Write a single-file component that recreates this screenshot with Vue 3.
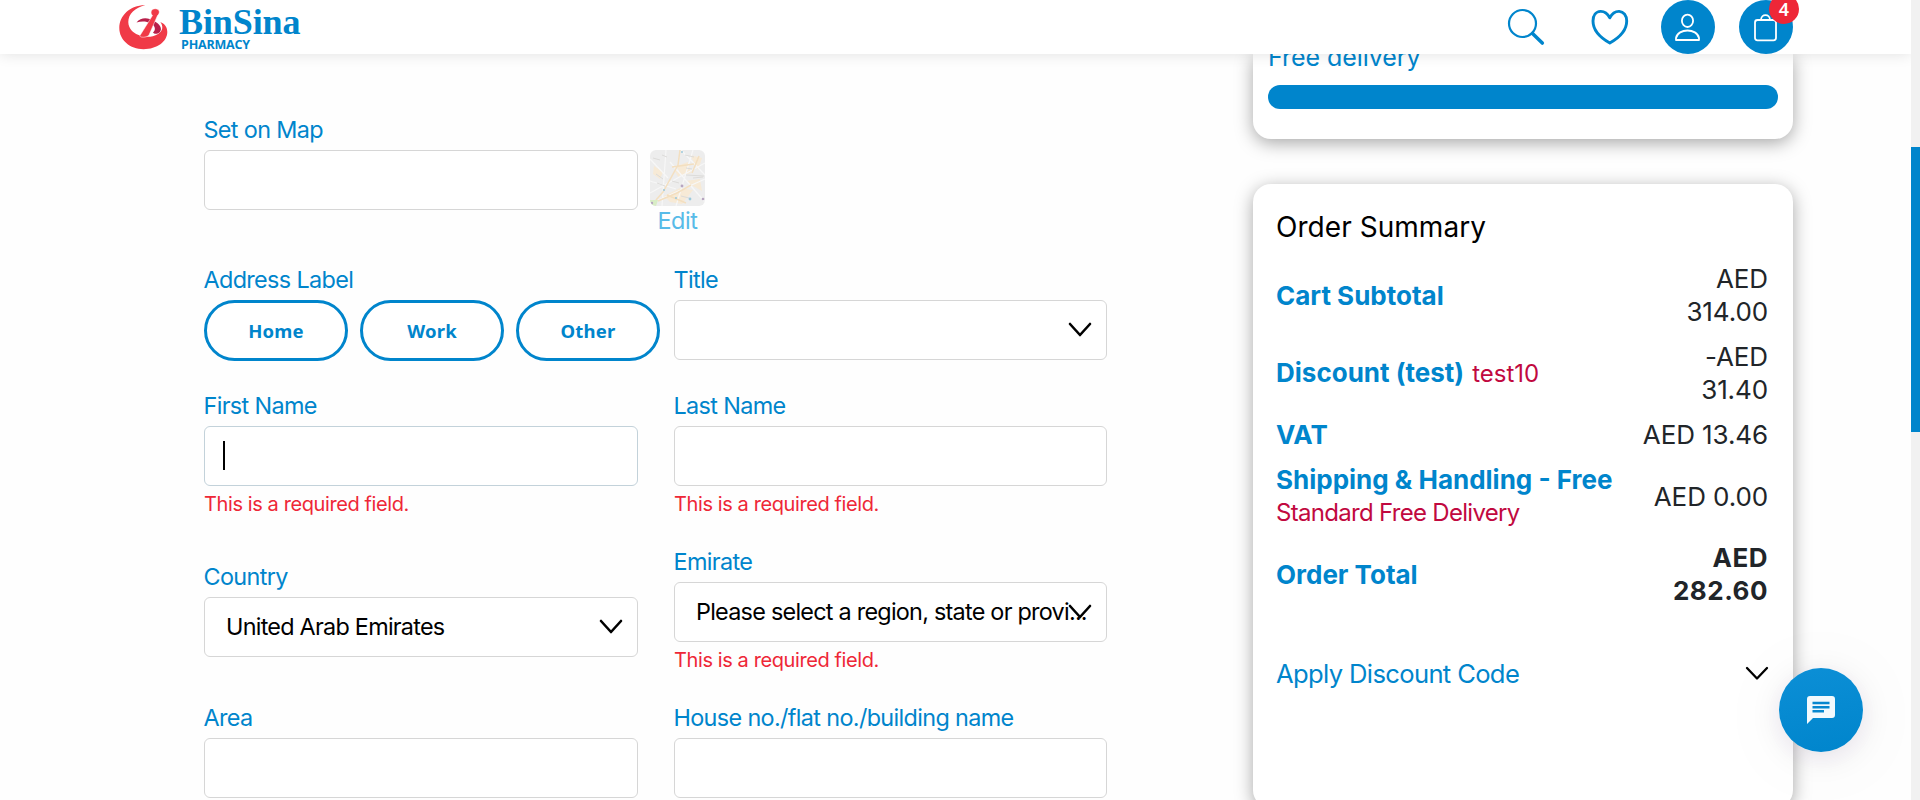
<script setup>
const fields = [
  { id: 'map', label: 'Set on Map', kind: 'map' },
  { id: 'blank', kind: 'blank' },
  { id: 'tag', label: 'Address Label', kind: 'tags' },
  { id: 'title', label: 'Title', kind: 'select', value: '' },
  { id: 'first', label: 'First Name', kind: 'input', focused: true, error: true },
  { id: 'last', label: 'Last Name', kind: 'input', error: true },
  { id: 'country', label: 'Country', kind: 'select', value: 'United Arab Emirates' },
  { id: 'emirate', label: 'Emirate', kind: 'select', value: 'Please select a region, state or provi...', error: true },
  { id: 'area', label: 'Area', kind: 'input' },
  { id: 'house', label: 'House no./flat no./building name', kind: 'input' },
]
const tags = ['Home', 'Work', 'Other']
const totals = [
  { id: 'subtotal', name: 'Cart Subtotal', lines: ['AED', '314.00'] },
  { id: 'discount', name: 'Discount (test)', code: 'test10', lines: ['-AED', '31.40'] },
  { id: 'vat', name: 'VAT', lines: ['AED 13.46'] },
  { id: 'shipping', name: 'Shipping & Handling - Free', note: 'Standard Free Delivery', lines: ['AED 0.00'] },
  { id: 'total', name: 'Order Total', lines: ['AED', '282.60'] },
]
</script>

<template>
  <div class="page">
    <header class="header">
      <div class="logo">
        <svg class="mark" width="50" height="46" viewBox="0 0 50 46">
          <path d="M18.500 18.600 C23 13 30 13.500 36 17 C42 20 45 25 41.500 28.500 C39 30.500 36 30 35 28.500 C38 26 37.500 22 33 19.500 C28 16.800 23 17 18.500 18.600Z" fill="#b81f4a" />
          <path d="M27.300 1.200 C12 1 1.300 11.500 1.300 24 C1.300 36 12 45.200 25.500 45.200 C39 45.200 49.300 37.500 49.300 28 C49.300 23 46.500 19.500 42.300 18 C45.500 22 45 27 40 30 C35 33 29 33.500 23.300 32 C16 30 10.300 25 10.300 18 C10.300 10 17 3.500 27.300 1.200Z" fill="#f03a47" />
          <path d="M33.300 7 C34.500 4.500 38 4.200 40 5.600 C42 7 41.500 10 39.500 11.500 L31 31 C29 34 20 34 22.300 31 L34.500 11.500 C33.200 10.500 32.700 8.500 33.300 7Z" fill="#f03a47" stroke="#fff" stroke-width=".5" />
        </svg>
        <div class="wordmark">
          <span class="brand">BinSina</span>
          <span class="sub">PHARMACY</span>
        </div>
      </div>
      <nav class="actions">
        <svg class="search" width="38" height="38" viewBox="0 0 38 38" fill="none" stroke="#0085cc">
          <circle cx="15.500" cy="15.500" r="13.500" stroke-width="2.200" />
          <path d="M25.500 25.500 L35.300 35" stroke-width="3.600" stroke-linecap="round" />
        </svg>
        <svg class="heart" width="38" height="36" viewBox="0 0 38 36" fill="none" stroke="#0085cc" stroke-width="2.900" stroke-linejoin="round">
          <path d="M18.800 8.800 C16 3.500 12.500 2.300 9.500 2.400 C5 2.600 2 6.500 2 12 C2 20.500 9 28.500 18.800 34 C28.600 28.500 35.700 20.500 35.700 12 C35.700 6.500 32.500 2.600 28.200 2.400 C25 2.300 21.600 3.500 18.800 8.800Z" />
        </svg>
        <span class="round">
          <svg width="54" height="54" viewBox="0 0 54 54" fill="none" stroke="#fff" stroke-width="1.8">
            <ellipse cx="26.500" cy="20.800" rx="5.600" ry="6.200" />
            <path d="M15 40 V38 C17 28 36 28 38 38 V40Z" stroke-linejoin="round" />
          </svg>
        </span>
        <span class="round bag">
          <svg width="54" height="54" viewBox="0 0 54 54" fill="none" stroke="#fff" stroke-width="1.8">
            <rect x="16" y="20" width="21" height="20.300" rx="2.500" />
            <path d="M22 20 C22 13.500 31 13.500 31 20" />
          </svg>
          <span class="badge">4</span>
        </span>
      </nav>
    </header>

    <main class="content">
      <form class="form">
        <div v-for="f in fields" :key="f.id" class="field" :class="'f-' + f.id">
          <label v-if="f.label" class="label">{{ f.label }}</label>

          <div v-if="f.kind === 'map'" class="map-row">
            <div class="box"></div>
            <div class="map">
              <svg width="55" height="56" viewBox="0 0 55 56" fill="none">
                <rect width="55" height="56" fill="#ededed" />
                <g class="streets">
                  <path d="M4 16 L13 22 L10 29 L3 24Z M27 16 L38 12 L41 23 L31 26Z M40 5 L52 8 L48 20Z M14 46 L30 38 L43 40 L32 54 L20 52Z M36 31 L50 29 L52 41 L43 36Z M24 20 L31 22 L29 28Z" fill="#f7ead6" />
                  <path d="M0 9 L18 28 M0 43 L55 13 M4 52 L55 29 M16 0 L12 56 M43 0 L26 56 M0 31 L26 39 M31 0 L55 25 M20 12 L55 52" stroke="#f7f7f7" stroke-width="1.200" />
                  <path d="M30 0 L28 15 L13 42 L6 50 M22 17 L44 14 M8 51 L27 43 L41 35 M49 6 L42 23 M17 45 L36 53" stroke="#f3dfc0" stroke-width="1.500" />
                  <path d="M3 8 l7 2 M12 5 l5 2 M7 33 l8 3 M36 25 l18 1 M43 28 l10 -1 M22 31 l7 2 M35 5 l9 2 M31 46 l8 2 M6 24 l7 5 M36 18 l6 1" stroke="#dcdbd9" stroke-width="1" />
                  <path d="M0 50 l8 0 l-2 6 l-6 0z" fill="#d9edc6" />
                  <g fill="#b7a5c0"><circle cx="32" cy="36" r="1.400" /><circle cx="53" cy="49" r="1.300" /><circle cx="2" cy="53" r="1.200" /></g>
                  <g fill="#9bc9db"><circle cx="40" cy="49" r="1.400" /><circle cx="26" cy="48" r="1" /><circle cx="14" cy="40" r="1" /><circle cx="32" cy="2" r="1" /></g>
                </g>
              </svg>
              <span class="edit">Edit</span>
            </div>
          </div>

          <div v-else-if="f.kind === 'tags'" class="tags">
            <button v-for="t in tags" :key="t" type="button" class="tag">{{ t }}</button>
          </div>

          <div v-else-if="f.kind === 'select'" class="box select">
            <span class="value">{{ f.value }}</span>
            <svg class="chevron" width="24" height="16" viewBox="0 0 24 16" fill="none" stroke="#000" stroke-width="2.600" stroke-linecap="round" stroke-linejoin="round">
              <path d="M2 2 L12 13 L22 2" />
            </svg>
          </div>

          <div v-else-if="f.kind === 'input'" class="box" :class="{ focused: f.focused }">
            <span v-if="f.focused" class="caret"></span>
          </div>

          <div v-if="f.error" class="error">This is a required field.</div>
        </div>
      </form>

      <aside class="side">
        <section class="card delivery">
          <div class="free">Free delivery</div>
          <div class="bar"></div>
        </section>
        <section class="card summary">
          <h2 class="heading">Order Summary</h2>
          <div v-for="t in totals" :key="t.id" class="line" :class="'l-' + t.id">
            <div class="name">
              <b>{{ t.name }}</b>
              <span v-if="t.code" class="code">{{ t.code }}</span>
              <div v-if="t.note" class="note">{{ t.note }}</div>
            </div>
            <div class="amount"><div v-for="l in t.lines" :key="l">{{ l }}</div></div>
          </div>
          <div class="apply">
            <span>Apply Discount Code</span>
            <svg width="24" height="16" viewBox="0 0 24 16" fill="none" stroke="#000" stroke-width="2.300" stroke-linecap="round" stroke-linejoin="round">
              <path d="M2 2 L12 12.500 L22 2" />
            </svg>
          </div>
        </section>
      </aside>
    </main>

    <button class="chat" type="button">
      <svg width="30" height="30" viewBox="0 0 30 30">
        <path d="M4 1 H26 Q29 1 29 4 V20 Q29 23 26 23 H7 L1 29 V4 Q1 1 4 1Z" fill="#f2f9fd" />
        <path d="M6.500 8 H23.500 M6.500 12.300 H23.500 M6.500 16.300 H18" stroke="#0787cf" stroke-width="2.600" />
      </svg>
    </button>
    <div class="scrollbar"><div class="thumb"></div></div>
  </div>
</template>

<style>
html, body { margin: 0; overflow: hidden; background: #fff; }
</style>

<style scoped>
* { box-sizing: border-box; }
.page {
  position: relative;
  width: 1920px;
  height: 800px;
  overflow: hidden;
  background: #fefefe;
  font-family: Inter, "Liberation Sans", sans-serif;
  color: #212529;
}
.header {
  position: relative;
  z-index: 2;
  width: 1911px;
  height: 54px;
  padding: 0 118px;
  display: flex;
  justify-content: space-between;
  background: #fff;
  box-shadow: 0 0 14px rgba(0, 0, 0, .12);
}
.logo { display: flex; padding-top: 4px; }
.mark { flex: none; }
.wordmark { display: flex; flex-direction: column; margin-left: 11px; color: #0085cc; }
.brand { font: bold 36px/36px "Liberation Serif", serif; letter-spacing: -.1px; }
.sub { margin: -1px 0 0 2px; font: bold 12.5px/12px "Open Sans", sans-serif; letter-spacing: -.2px; }
.actions { display: flex; align-items: flex-start; }
.search { margin: 8px 46px 0 0; }
.heart { margin: 9px 32px 0 0; }
.round { position: relative; width: 54px; height: 54px; border-radius: 50%; background: #0085cc; }
.round svg { display: block; }
.bag { margin-left: 24px; }
.badge {
  position: absolute;
  left: 30px;
  top: -6px;
  width: 30px;
  height: 30px;
  border-radius: 50%;
  background: #ee2737;
  color: #fff;
  font: 600 18px/30px "Noto Sans", sans-serif;
  text-align: center;
}
.content { display: flex; }
.form {
  width: 903px;
  margin: 62px 0 0 204px;
  display: grid;
  grid-template-columns: 434px 433px;
  column-gap: 36px;
  grid-template-rows: 150px 126px 156px 156px 96px;
}
.field { min-width: 0; }
.f-country { padding-top: 15px; }
.label { display: block; height: 28px; margin: 0 0 6px -.5px; font-size: 23.4px; line-height: 28px; font-weight: 400; letter-spacing: -.65px; color: #0085cc; white-space: nowrap; }
.box { position: relative; width: 100%; height: 60px; border: 1px solid #d6d6d6; border-radius: 6px; background: #fff; }
.focused { border-color: #c3d2da; padding: 14px 18px; }
.caret { display: block; width: 2px; height: 29px; background: #000; }
.map-row { display: flex; gap: 12px; }
.map-row .box { width: 434px; flex: none; }
.map { width: 55px; flex: none; display: flex; flex-direction: column; align-items: center; }
.map svg { border-radius: 6px; }
.streets { filter: blur(.6px); }
.edit { font-size: 23.4px; line-height: 30px; font-weight: 400; letter-spacing: -.4px; color: #57bbe8; }
.tags { display: flex; gap: 12px; }
.tag {
  flex: none;
  width: 144px;
  height: 61px;
  padding: 0;
  border: 3px solid #0085cc;
  border-radius: 31px;
  background: #fff;
  color: #0085cc;
  font: 700 18.5px/50px "Noto Sans", sans-serif;
  letter-spacing: .2px;
}
.tag::first-line { line-height: 50px; }
.select { display: flex; align-items: center; padding-left: 21px; }
.value { font-size: 23.4px; line-height: 30px; font-weight: 400; letter-spacing: -.75px; color: #000; white-space: nowrap; }
.chevron { position: absolute; right: 14px; top: 21px; }
.error { margin-top: 6px; font-size: 20px; line-height: 24px; font-weight: 400; color: #ee2737; letter-spacing: -.4px; }
.side { width: 540px; margin-left: 146px; }
.card { background: #fff; border-radius: 18px; box-shadow: 0 4px 18px rgba(0, 0, 0, .35); }
.delivery { display: flex; flex-direction: column; height: 85px; padding-left: 15px; border-radius: 0 0 18px 18px; }
.free { flex: none; height: 31px; font-size: 25px; line-height: 28px; margin-top: -11px; letter-spacing: -.05px; color: #0085cc; }
.bar { flex: none; width: 510px; height: 24px; margin-top: 11px; border-radius: 12px; background: #0085cc; }
.summary { height: 624px; margin-top: 45px; padding: 26px 25px 0 23px; }
.heading { margin: 0 0 12px; font-size: 28px; line-height: 34px; font-weight: 400; letter-spacing: .05px; color: #000; }
.line { display: flex; justify-content: space-between; align-items: center; font-size: 26px; line-height: 33px; height: 78px; }
.name { color: #0085cc; letter-spacing: -.7px; white-space: nowrap; }
.name b { font-weight: 650; letter-spacing: 0; }
.code, .note { color: #c1093f; font-size: 24px; }
.code { margin-left: 8px; letter-spacing: 0; }
.note { line-height: 33px; }
.amount { text-align: right; font-weight: 400; letter-spacing: -.1px; white-space: nowrap; }
.l-vat { height: 45px; }
.l-total .amount { font-weight: 650; letter-spacing: .5px; }
.apply { display: flex; justify-content: space-between; align-items: center; margin: 45px -1px 0 0; font-size: 25.6px; line-height: 32px; font-weight: 400; letter-spacing: -.65px; color: #0085cc; }
.chat {
  position: absolute;
  z-index: 3;
  left: 1779px;
  top: 668px;
  width: 84px;
  height: 84px;
  padding: 0;
  border: 0;
  border-radius: 50%;
  display: flex;
  align-items: center;
  justify-content: center;
  background: linear-gradient(170deg, #0c8fd6, #0085cc);
  box-shadow: 0 6px 24px rgba(60, 20, 70, .1), 0 6px 80px rgba(60, 20, 70, .05);
}
.scrollbar { position: absolute; z-index: 4; right: 0; top: 0; width: 9px; height: 800px; padding-top: 147px; background: #f1f1f1; }
.thumb { height: 285px; background: #0085cc; }
</style>
